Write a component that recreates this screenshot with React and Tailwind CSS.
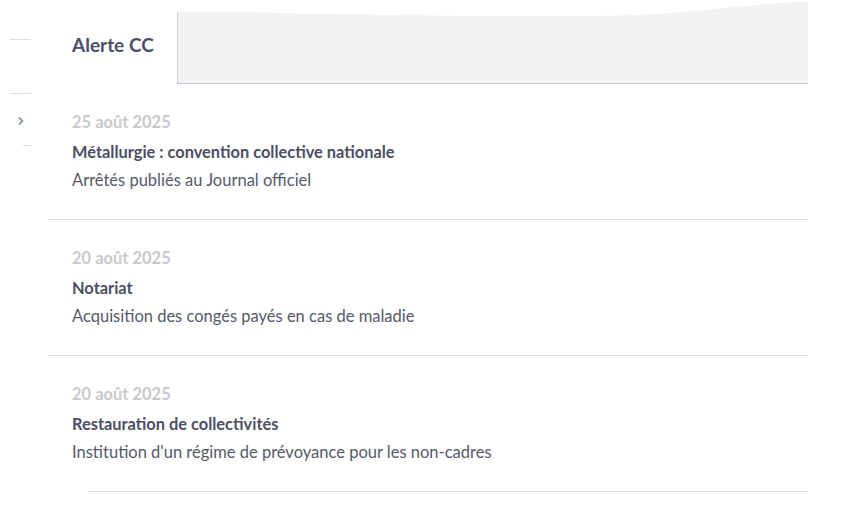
const alerts = [
  {
    date: "25 août 2025",
    title: "Métallurgie : convention collective nationale",
    text: "Arrêtés publiés au Journal officiel",
  },
  {
    date: "20 août 2025",
    title: "Notariat",
    text: "Acquisition des congés payés en cas de maladie",
  },
  {
    date: "20 août 2025",
    title: "Restauration de collectivités",
    text: "Institution d'un régime de prévoyance pour les non-cadres",
  },
];

export default function App() {
  return (
    <div className="min-h-screen w-[861px] h-[514px] overflow-hidden bg-white flex font-['Lato',sans-serif]">
      {/* Sidebar fragments */}
      <div className="w-[48px] flex flex-col">
        <div className="mt-[39px] ml-[10px] w-[21px] h-px bg-[#dcdcdc]" />
        <div className="mt-[53px] ml-[10px] w-[21px] h-px bg-[#dcdcdc]" />
        <svg className="mt-[22px] ml-[17px]" width="8" height="10" viewBox="0 0 8 10" fill="none">
          <path d="M2 1.5 L5.5 5 L2 8.5" stroke="#7180a0" strokeWidth="1.4" />
        </svg>
        <div className="mt-[19px] ml-[23px] w-[8px] h-px bg-[#dcdcdc]" />
      </div>

      {/* Main */}
      <div className="w-[760px] flex flex-col">
        <header className="h-[84px] flex">
          <h1 className="w-[129px] pl-6 pt-[33px] text-[19px] font-bold text-[#4b4f65] leading-6">Alerte CC</h1>
          <div className="relative flex-1 bg-[#f2f2f2] border-l border-b border-[#c5c8d8]">
            <svg className="absolute -left-px top-0" width="632" height="17" viewBox="0 0 632 17" preserveAspectRatio="none">
              <path d="M0 0 H632 V1 C560 5 500 16 420 16 L310 16 C220 16 120 12 0 12 Z" fill="#ffffff" />
            </svg>
          </div>
        </header>

        {alerts.map((a, i) => (
          <div key={i}>
            <div className="px-6 py-6 leading-[29px]">
              <div className="text-[16.5px] font-bold text-[#c9c9c9]">{a.date}</div>
              <div className="text-[16.4px] font-bold text-[#4b4f65]">{a.title}</div>
              <div className="text-[16.5px] text-[#555a6a]">{a.text}</div>
            </div>
            <div className={i === alerts.length - 1 ? "ml-10 h-px bg-[#dedee3]" : "h-px bg-[#dedee3]"} />
          </div>
        ))}
      </div>
    </div>
  );
}
